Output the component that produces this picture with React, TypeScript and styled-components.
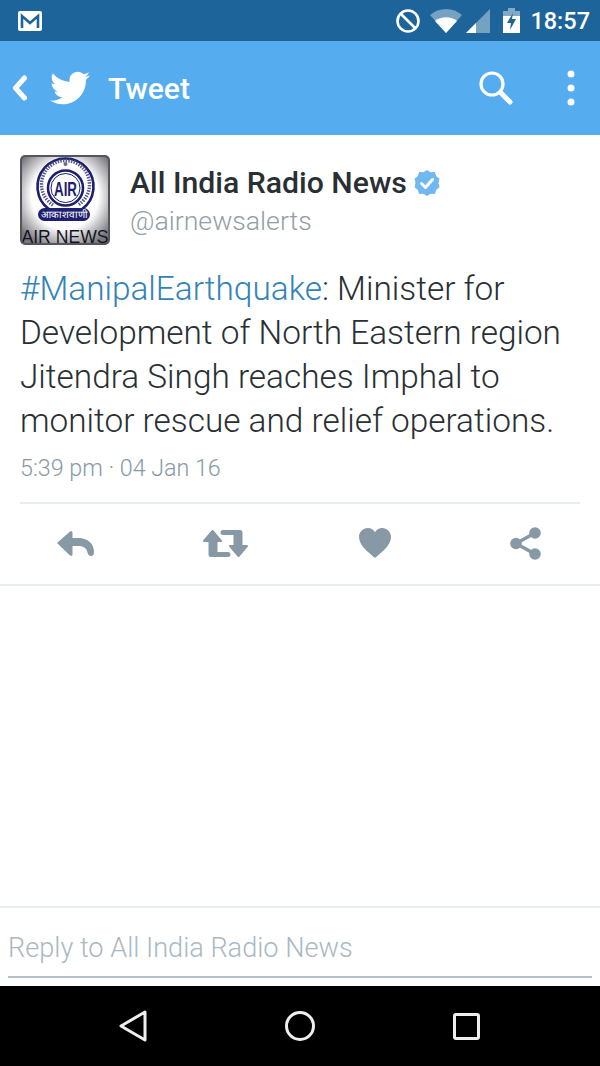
import styled, { createGlobalStyle } from "styled-components";
import { FaTwitter } from "react-icons/fa";

const GlobalStyle = createGlobalStyle`
  html, body {
    margin: 0;
    padding: 0;
    background: #fff;
    font-family: Roboto, "Liberation Sans", sans-serif;
  }
`;

const Screen = styled.div`
  width: 600px;
  height: 1066px;
  display: flex;
  flex-direction: column;
  overflow: hidden;
`;

const StatusBar = styled.div`
  height: 41px;
  flex: none;
  background: #1c6499;
  display: flex;
  align-items: center;
  justify-content: space-between;
  padding: 0 10px 0 18px;
`;

const StatusRight = styled.div`
  display: flex;
  align-items: center;
`;

const StatusIcon = styled.svg<{ $gap: number }>`
  margin-left: ${(p) => p.$gap}px;
`;

const Clock = styled.span`
  color: #fff;
  font-size: 23.5px;
  font-weight: 500;
  margin-left: 10px;
`;

const AppBar = styled.div`
  height: 94px;
  flex: none;
  background: #55acee;
  display: flex;
  align-items: center;
  padding: 0 0 0 12px;
`;

const Title = styled.span`
  color: #fff;
  font-size: 30px;
  font-weight: 500;
  margin-left: 18px;
  flex: 1;
`;

const Bird = styled(FaTwitter)`
  width: 40px;
  height: 40px;
  color: #fff;
  margin-left: 22px;
`;

const SearchIcon = styled.svg`
  margin-right: 53px;
`;

const MenuIcon = styled.svg`
  margin-right: 25px;
`;

const Main = styled.main`
  flex: 1;
  background: #fff;
  display: flex;
  flex-direction: column;
`;

const Tweet = styled.article`
  padding: 20px 20px 0;
  border-bottom: 2px solid #e8edf0;
`;

const Header = styled.header`
  display: flex;
  align-items: flex-start;
  gap: 20px;
`;

const Avatar = styled.svg`
  flex: none;
  display: block;
  border-radius: 5px;
`;

const Names = styled.div`
  padding-top: 9px;
`;

const NameRow = styled.div`
  display: flex;
  align-items: center;
  gap: 7px;
`;

const Name = styled.span`
  font-size: 30.2px;
  line-height: 38px;
  font-weight: 500;
  color: #292f33;
`;

const Handle = styled.div`
  font-size: 26.7px;
  line-height: 38px;
  font-weight: 300;
  color: #929ea6;
`;

const Body = styled.p`
  margin: 22px 0 0;
  font-size: 33.37px;
  line-height: 44px;
  font-weight: 300;
  color: #292f33;
  white-space: nowrap;
`;

const Hashtag = styled.span`
  color: #3283b8;
`;

const Timestamp = styled.div`
  margin-top: 10px;
  font-size: 23.25px;
  line-height: 30px;
  font-weight: 300;
  color: #8899a6;
`;

const Rule = styled.hr`
  margin: 19px 0 0;
  height: 2px;
  border: 0;
  background: #e8edf0;
`;

const Actions = styled.div`
  margin: 0 -20px;
  height: 80px;
  padding-bottom: 2px;
  box-sizing: border-box;
  display: grid;
  grid-template-columns: repeat(4, 150px);
  justify-content: start;
  align-items: center;
  justify-items: center;
`;

const ReplyBar = styled.div`
  flex: none;
  height: 80px;
  box-sizing: border-box;
  border-top: 2px solid #e8edf0;
  padding: 0 8px 8px;
  display: flex;
  background: #fff;
`;

const ReplyField = styled.div`
  flex: 1;
  border-bottom: 2px solid #b4bfc6;
  display: flex;
  align-items: center;
  font-size: 27.13px;
  font-weight: 300;
  color: #aab8c2;
  padding-top: 12px;
  box-sizing: border-box;
`;

const NavBar = styled.nav`
  flex: none;
  height: 80px;
  background: #000;
  display: grid;
  grid-template-columns: repeat(3, 166.5px);
  justify-content: start;
  align-items: center;
  justify-items: center;
  padding-left: 50px;
`;

const ICON = "#8899a6";
const NAVY = "#1e1f6e";

export default function App() {
  return (
    <Screen>
      <GlobalStyle />
      <StatusBar>
        <svg width="24" height="20" viewBox="0 0 24 20">
          <rect x="0" y="0" width="24" height="20" rx="2" fill="#fff" />
          <path d="M4 17V5l8 7 8-7v12" fill="none" stroke="#1c6499" strokeWidth="2.6" />
        </svg>
        <StatusRight>
          <svg width="26" height="26" viewBox="0 0 26 26">
            <circle cx="13" cy="13" r="10.5" fill="none" stroke="#fff" strokeWidth="2.6" />
            <path d="M6 6l14 14" stroke="#fff" strokeWidth="2.6" />
          </svg>
          <StatusIcon $gap={9} width="32" height="24" viewBox="0 0 32 24">
            <path d="M0 6C9-2 23-2 32 6L16 24Z" fill="#fff" opacity=".4" />
            <path d="M5 12C11 7 21 7 27 12L16 24Z" fill="#fff" />
          </StatusIcon>
          <StatusIcon $gap={4} width="24" height="24" viewBox="0 0 24 24">
            <path d="M24 0V24H0Z" fill="#fff" opacity=".4" />
            <path d="M10 14V24H0Z" fill="#fff" />
          </StatusIcon>
          <StatusIcon $gap={13} width="17" height="25" viewBox="0 0 17 25">
            <path d="M5 0h7v3h5v22H0V3h5Z" fill="#fff" opacity=".45" />
            <path d="M0 8h17v17H0Z" fill="#fff" />
            <path d="M10 5L4 15h4l-1 7 6-11H9Z" fill="#1c6499" />
          </StatusIcon>
          <Clock>18:57</Clock>
        </StatusRight>
      </StatusBar>

      <AppBar>
        <svg width="16" height="26" viewBox="0 0 16 26">
          <path d="M12.5 3L3.5 13l9 10" fill="none" stroke="#fff" strokeWidth="5" strokeLinecap="round" strokeLinejoin="round" />
        </svg>
        <Bird />
        <Title>Tweet</Title>
        <SearchIcon width="36" height="36" viewBox="0 0 36 36">
          <circle cx="14" cy="14" r="11" fill="none" stroke="#fff" strokeWidth="3.2" />
          <path d="M23 23l9 9" stroke="#fff" strokeWidth="5" strokeLinecap="round" />
        </SearchIcon>
        <MenuIcon width="8" height="36" viewBox="0 0 8 36">
          <circle cx="4" cy="4" r="3.5" fill="#fff" />
          <circle cx="4" cy="18" r="3.5" fill="#fff" />
          <circle cx="4" cy="32" r="3.5" fill="#fff" />
        </MenuIcon>
      </AppBar>

      <Main>
        <Tweet>
          <Header>
            <Avatar width="90" height="90" viewBox="0 0 90 90">
              <defs>
                <radialGradient id="plate" cx="50%" cy="45%" r="62%">
                  <stop offset="60%" stopColor="#ffffff" />
                  <stop offset="100%" stopColor="#77777f" />
                </radialGradient>
              </defs>
              <rect width="90" height="90" fill="url(#plate)" />
              <path d="M28.800 54A28 28 0 1 1 62.200 54" fill="none" stroke={NAVY} strokeWidth="2.600" />
              <path d="M33 50A24 24 0 1 1 58 50" fill="none" stroke="#5a5a88" strokeWidth="3.500" strokeDasharray="1.500 1.200" />
              <circle cx="45.500" cy="33" r="17.500" fill="#fff" stroke={NAVY} strokeWidth="2.600" />
              <circle cx="45.500" cy="33" r="14.500" fill="none" stroke={NAVY} strokeWidth="1" />
              <text x="45.500" y="41" textAnchor="middle" fontFamily="Liberation Sans, sans-serif" fontSize="21" fontWeight="700" fill={NAVY} textLength="23" lengthAdjust="spacingAndGlyphs">AIR</text>
              <circle cx="45.500" cy="9" r="2" fill="#6a6a80" />
              <rect x="18" y="53" width="52" height="13" rx="6.500" fill={NAVY} />
              <text x="44" y="63" textAnchor="middle" fontFamily="Noto Sans CJK SC, sans-serif" fontSize="10" fill="#fff">आकाशवाणी</text>
              <text x="45" y="87.500" textAnchor="middle" fontFamily="Liberation Sans, sans-serif" fontSize="18" fill="#14141c" textLength="87" lengthAdjust="spacingAndGlyphs">AIR NEWS</text>
              <rect x="1" y="1" width="88" height="88" rx="5" fill="none" stroke="#55555c" strokeWidth="2" />
            </Avatar>
            <Names>
              <NameRow>
                <Name>All India Radio News</Name>
                <svg width="26" height="26" viewBox="0 0 26 26">
                  <path d="M13 0l3.600 2.300 4.300-.3 1.200 4.100 3.400 2.700L24.500 13l1 4.200-3.400 2.700-1.200 4.100-4.300-.3L13 26l-3.600-2.300-4.300.3-1.200-4.100L.5 17.200l1-4.200-1-4.200 3.400-2.700L5.100 2l4.300.3Z" fill="#6fb9f0" />
                  <path d="M7.500 13.500l4 4 7-8" fill="none" stroke="#fff" strokeWidth="3" strokeLinecap="round" strokeLinejoin="round" />
                </svg>
              </NameRow>
              <Handle>@airnewsalerts</Handle>
            </Names>
          </Header>
          <Body>
            <Hashtag>#ManipalEarthquake</Hashtag>: Minister for
            <br />
            Development of North Eastern region
            <br />
            Jitendra Singh reaches Imphal to
            <br />
            monitor rescue and relief operations.
          </Body>
          <Timestamp>5:39 pm · 04 Jan 16</Timestamp>
          <Rule />
          <Actions>
            <svg width="37" height="25" viewBox="0 0 37 25">
              <path d="M0 12L13 .6c1-.9 2.500-.4 2.500 1V7h6C30 7 37 12 37 21c0 2.500-1 4-3 4s-3-1.200-3.500-3.500c-.7-4-4-6.500-9-6.500h-6v8.400c0 1.400-1.500 1.900-2.500 1Z" fill={ICON} />
            </svg>
            <svg width="45" height="27" viewBox="0 0 45 27">
              <g fill={ICON} stroke={ICON} strokeWidth="2" strokeLinejoin="round">
                <path d="M9.500 1L18 11h-4.500v12H25a1.500 1.500 0 0 1 0 3H8a1.500 1.500 0 0 1-1.500-1.500V11H1Z" />
                <path d="M35.500 26L27 16h4.500V4H20a1.500 1.500 0 0 1 0-3h17a1.500 1.500 0 0 1 1.500 1.500V16H44Z" />
              </g>
            </svg>
            <svg width="32" height="30" viewBox="0 0 32 30">
              <path d="M16 30C11 25.500 0 18 0 9 0 4 4 0 8.800 0 12 0 14.700 1.700 16 4.200 17.300 1.700 20 0 23.200 0 28 0 32 4 32 9 32 18 21 25.500 16 30Z" fill={ICON} />
            </svg>
            <svg width="31" height="33" viewBox="0 0 31 33">
              <path d="M25 6L6 16.500 25 27" fill="none" stroke={ICON} strokeWidth="3.500" />
              <circle cx="25" cy="6" r="5.800" fill={ICON} />
              <circle cx="6" cy="16.500" r="5.800" fill={ICON} />
              <circle cx="25" cy="27" r="5.800" fill={ICON} />
            </svg>
          </Actions>
        </Tweet>
      </Main>

      <ReplyBar>
        <ReplyField>Reply to All India Radio News</ReplyField>
      </ReplyBar>

      <NavBar>
        <svg width="28" height="32" viewBox="0 0 28 32">
          <path d="M26 2L2 16l24 14Z" fill="none" stroke="#eee" strokeWidth="3" strokeLinejoin="round" />
        </svg>
        <svg width="30" height="30" viewBox="0 0 30 30">
          <circle cx="15" cy="15" r="13.500" fill="none" stroke="#eee" strokeWidth="3" />
        </svg>
        <svg width="27" height="27" viewBox="0 0 27 27">
          <rect x="1.500" y="1.500" width="24" height="24" rx="1.500" fill="none" stroke="#eee" strokeWidth="3" />
        </svg>
      </NavBar>
    </Screen>
  );
}
